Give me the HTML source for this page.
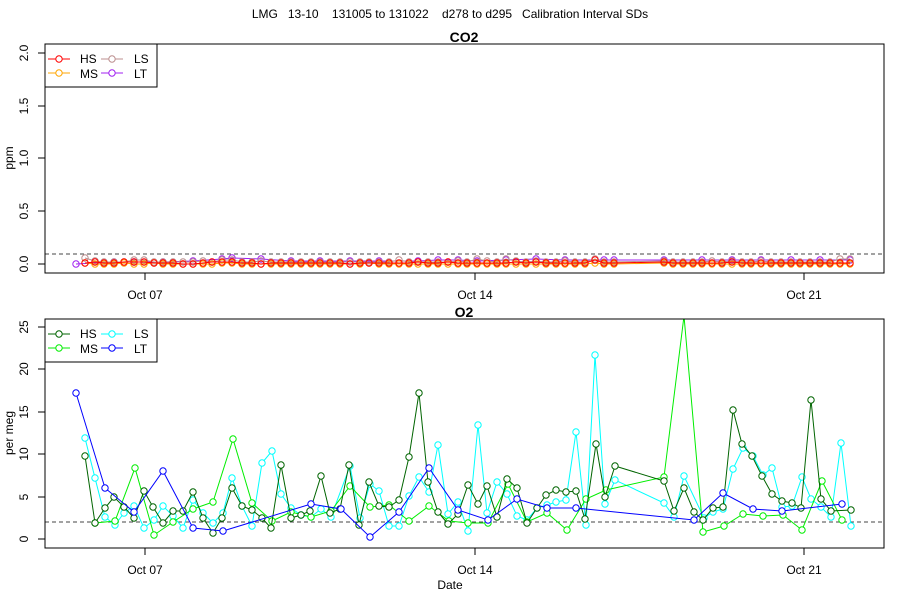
<!DOCTYPE html>
<html><head><meta charset="utf-8"><style>
html,body{margin:0;padding:0;background:#fff;}
svg{display:block;font-family:"Liberation Sans",Arial,sans-serif;}
</style></head><body>
<svg width="900" height="600" viewBox="0 0 900 600" xmlns="http://www.w3.org/2000/svg">
<defs>
<marker id="mR" viewBox="0 0 10 10" refX="5" refY="5" markerWidth="10" markerHeight="10" markerUnits="userSpaceOnUse"><circle cx="5" cy="5" r="3.2" fill="none" stroke="#ff0000" stroke-width="1"/></marker>
<marker id="mO" viewBox="0 0 10 10" refX="5" refY="5" markerWidth="10" markerHeight="10" markerUnits="userSpaceOnUse"><circle cx="5" cy="5" r="3.2" fill="none" stroke="#ffa500" stroke-width="1"/></marker>
<marker id="mB" viewBox="0 0 10 10" refX="5" refY="5" markerWidth="10" markerHeight="10" markerUnits="userSpaceOnUse"><circle cx="5" cy="5" r="3.2" fill="none" stroke="#bc8f8f" stroke-width="1"/></marker>
<marker id="mP" viewBox="0 0 10 10" refX="5" refY="5" markerWidth="10" markerHeight="10" markerUnits="userSpaceOnUse"><circle cx="5" cy="5" r="3.2" fill="none" stroke="#a020f0" stroke-width="1"/></marker>
<marker id="mDG" viewBox="0 0 10 10" refX="5" refY="5" markerWidth="10" markerHeight="10" markerUnits="userSpaceOnUse"><circle cx="5" cy="5" r="3.2" fill="#fff" stroke="#006400" stroke-width="1"/></marker>
<marker id="mG" viewBox="0 0 10 10" refX="5" refY="5" markerWidth="10" markerHeight="10" markerUnits="userSpaceOnUse"><circle cx="5" cy="5" r="3.2" fill="#fff" stroke="#00ee00" stroke-width="1"/></marker>
<marker id="mC" viewBox="0 0 10 10" refX="5" refY="5" markerWidth="10" markerHeight="10" markerUnits="userSpaceOnUse"><circle cx="5" cy="5" r="3.2" fill="#fff" stroke="#00ffff" stroke-width="1"/></marker>
<marker id="mBl" viewBox="0 0 10 10" refX="5" refY="5" markerWidth="10" markerHeight="10" markerUnits="userSpaceOnUse"><circle cx="5" cy="5" r="3.2" fill="#fff" stroke="#0000ff" stroke-width="1"/></marker>
<clipPath id="c2"><rect x="45" y="319" width="839" height="229"/></clipPath>
</defs>

<text x="450" y="18" font-size="12" text-anchor="middle" xml:space="preserve">LMG   13-10    131005 to 131022    d278 to d295   Calibration Interval SDs</text>

<!-- TOP PANEL -->
<text x="464" y="42" font-size="14" font-weight="bold" text-anchor="middle">CO2</text>
<line x1="45" y1="254" x2="884" y2="254" stroke="#444" stroke-dasharray="4,3"/>
<g fill="none" stroke-width="1">
<polyline stroke="#a020f0" marker-start="url(#mP)" marker-mid="url(#mP)" marker-end="url(#mP)" points="76,264 114,262 134,262 163,262 193,261 222,259 232,258 261,259 291,261 320,261 350,261 379,261 418,261 438,260 458,260 477,261 506,260 536,259 565,260 604,260 614,260 664,260 702,260 732,260 761,260 791,260 820,260 850,260"/>
<polyline stroke="#bc8f8f" marker-start="url(#mB)" marker-mid="url(#mB)" marker-end="url(#mB)" points="85,258 95,261 104,262 114,262 124,262 134,260 144,260 154,262 163,262 173,262 183,262 193,262 203,261 212,262 222,260 232,260 242,262 252,262 261,261 271,262 281,262 291,262 301,262 311,262 320,262 330,262 340,262 350,262 360,262 369,262 379,262 389,262 399,260 409,262 418,262 428,262 438,262 448,262 458,261 467,262 477,259 487,261 497,262 506,259 516,261 526,262 536,261 546,262 556,262 565,261 575,262 585,262 595,259 604,262 614,262 664,261 673,262 683,262 693,262 702,262 712,261 722,262 732,261 742,262 751,262 761,261 771,262 781,262 791,262 800,262 810,262 820,262 830,262 840,259 850,259"/>
<polyline stroke="#ffa500" marker-start="url(#mO)" marker-mid="url(#mO)" marker-end="url(#mO)" points="85,263 95,264 104,264 114,264 124,263 134,264 144,264 154,263 163,264 173,264 183,264 193,264 203,264 212,264 222,263 232,263 242,264 252,264 261,264 271,264 281,264 291,264 301,264 311,264 320,264 330,264 340,264 350,264 360,264 369,263 379,264 389,264 399,264 409,264 418,264 428,264 438,264 448,264 458,264 467,264 477,264 487,264 497,264 506,264 516,264 526,264 536,264 546,264 556,264 565,264 575,264 585,264 595,263 604,264 614,264 664,263 673,264 683,264 693,264 702,264 712,264 722,264 732,264 742,264 751,264 761,264 771,264 781,264 791,264 800,264 810,264 820,264 830,264 840,264 850,264"/>
<polyline stroke="#ff0000" marker-start="url(#mR)" marker-mid="url(#mR)" marker-end="url(#mR)" points="85,263 95,262 104,263 114,263 124,262 134,262 144,262 154,263 163,263 173,263 183,264 193,264 203,263 212,262 222,262 232,262 242,263 252,263 261,264 271,263 281,263 291,263 301,263 311,263 320,263 330,263 340,263 350,264 360,263 369,263 379,263 389,263 399,263 409,263 418,262 428,263 438,263 448,262 458,263 467,263 477,263 487,263 497,263 506,263 516,262 526,263 536,262 546,263 556,263 565,263 575,263 585,263 595,260 604,263 614,263 664,262 673,263 683,263 693,263 702,263 712,263 722,263 732,262 742,263 751,263 761,263 771,263 781,263 791,263 800,263 810,263 820,263 830,263 840,263 850,263"/>
</g>
<rect x="45" y="44" width="839" height="229" fill="none" stroke="#000"/>
<!-- top legend -->
<rect x="45" y="44" width="112" height="43" fill="#fff" stroke="#000"/>
<g stroke-width="1" fill="none">
<line x1="48" y1="59" x2="70" y2="59" stroke="#ff0000"/><circle cx="59" cy="59" r="3.2" fill="#fff" stroke="#ff0000"/>
<line x1="48" y1="73" x2="70" y2="73" stroke="#ffa500"/><circle cx="59" cy="73" r="3.2" fill="#fff" stroke="#ffa500"/>
<line x1="101" y1="59" x2="123" y2="59" stroke="#bc8f8f"/><circle cx="112" cy="59" r="3.2" fill="#fff" stroke="#bc8f8f"/>
<line x1="101" y1="73" x2="123" y2="73" stroke="#a020f0"/><circle cx="112" cy="73" r="3.2" fill="#fff" stroke="#a020f0"/>
</g>
<g font-size="12"><text x="80" y="63">HS</text><text x="80" y="78">MS</text><text x="134" y="63">LS</text><text x="134" y="78">LT</text></g>
<!-- top y axis -->
<g stroke="#000"><line x1="38" y1="264" x2="45" y2="264"/><line x1="38" y1="211" x2="45" y2="211"/><line x1="38" y1="158" x2="45" y2="158"/><line x1="38" y1="106" x2="45" y2="106"/><line x1="38" y1="53" x2="45" y2="53"/></g>
<g font-size="12" text-anchor="middle">
<text transform="translate(28,264) rotate(-90)">0.0</text>
<text transform="translate(28,211) rotate(-90)">0.5</text>
<text transform="translate(28,158) rotate(-90)">1.0</text>
<text transform="translate(28,106) rotate(-90)">1.5</text>
<text transform="translate(28,53) rotate(-90)">2.0</text>
<text transform="translate(13,158) rotate(-90)">ppm</text>
</g>
<g stroke="#000"><line x1="145" y1="273" x2="145" y2="280"/><line x1="475" y1="273" x2="475" y2="280"/><line x1="804" y1="273" x2="804" y2="280"/></g>
<g font-size="12" text-anchor="middle"><text x="145" y="299">Oct 07</text><text x="475" y="299">Oct 14</text><text x="804" y="299">Oct 21</text></g>

<!-- BOTTOM PANEL -->
<text x="464" y="317" font-size="14" font-weight="bold" text-anchor="middle">O2</text>
<line x1="45" y1="522" x2="884" y2="522" stroke="#444" stroke-dasharray="4,3"/>
<g fill="none" stroke-width="1" clip-path="url(#c2)">
<polyline stroke="#00ffff" marker-start="url(#mC)" marker-mid="url(#mC)" marker-end="url(#mC)" points="85,438 95,478 105,517 115,525 124,513 134,506 144,528 154,520 163,506 173,516 183,528 193,500 203,513 213,523 223,513 232,478 242,506 252,526 262,463 272,451 281,494 291,508 301,515 311,517 321,509 331,517 350,466 360,518 370,484 379,491 389,526 399,526 409,496 419,477 429,492 438,445 448,514 458,502 468,531 478,425 487,513 497,482 507,494 517,516 527,520 537,508 547,505 556,502 566,500 576,432 586,525 595,355 605,504 615,480 664,503 674,517 684,476 704,518 713,512 723,509 733,469 743,448 753,456 763,475 772,468 782,507 792,506 802,477 811,499 821,507 831,517 841,443 851,526"/>
<polyline stroke="#00ee00" marker-start="url(#mG)" marker-mid="url(#mG)" marker-end="url(#mG)" points="95,523 115,521 135,468 154,535 173,522 193,509 213,502 233,439 252,503 272,521 291,512 311,517 331,511 350,486 370,507 389,505 409,521 429,506 449,521 468,523 488,523 508,484 527,522 547,513 567,530 586,499 606,490 664,477 684,316 703,532 724,526 743,514 763,516 783,515 802,530 822,481 842,520"/>
<polyline stroke="#006400" marker-start="url(#mDG)" marker-mid="url(#mDG)" marker-end="url(#mDG)" points="85,456 95,523 105,508 114,497 124,507 134,518 144,491 153,507 163,523 173,511 183,511 193,492 203,518 213,533 222,518 232,488 242,506 252,510 262,518 271,528 281,465 291,518 301,515 310,511 321,476 330,513 340,509 349,465 359,525 369,482 379,506 389,507 399,500 409,457 419,393 428,482 438,512 448,524 458,514 468,485 478,504 487,486 497,517 507,479 517,488 527,523 537,508 546,495 556,490 566,492 576,491 585,519 596,444 605,497 615,466 664,481 674,511 684,488 694,512 703,520 713,508 723,507 733,410 742,444 752,456 762,476 772,494 782,501 792,503 801,508 811,400 821,499 831,511 851,510"/>
<polyline stroke="#0000ff" marker-start="url(#mBl)" marker-mid="url(#mBl)" marker-end="url(#mBl)" points="76,393 105,488 134,512 163,471 193,528 223,531 311,504 341,509 370,537 399,512 429,468 458,510 488,520 517,499 547,508 576,508 694,520 723,493 753,509 782,511 842,504"/>
</g>
<rect x="45" y="319" width="839" height="229" fill="none" stroke="#000"/>
<!-- bottom legend -->
<rect x="45" y="319" width="112" height="43" fill="#fff" stroke="#000"/>
<g stroke-width="1" fill="none">
<line x1="48" y1="334" x2="70" y2="334" stroke="#006400"/><circle cx="59" cy="334" r="3.2" fill="#fff" stroke="#006400"/>
<line x1="48" y1="348" x2="70" y2="348" stroke="#00ee00"/><circle cx="59" cy="348" r="3.2" fill="#fff" stroke="#00ee00"/>
<line x1="101" y1="334" x2="123" y2="334" stroke="#00ffff"/><circle cx="112" cy="334" r="3.2" fill="#fff" stroke="#00ffff"/>
<line x1="101" y1="348" x2="123" y2="348" stroke="#0000ff"/><circle cx="112" cy="348" r="3.2" fill="#fff" stroke="#0000ff"/>
</g>
<g font-size="12"><text x="80" y="338">HS</text><text x="80" y="353">MS</text><text x="134" y="338">LS</text><text x="134" y="353">LT</text></g>
<g stroke="#000"><line x1="38" y1="539" x2="45" y2="539"/><line x1="38" y1="497" x2="45" y2="497"/><line x1="38" y1="454" x2="45" y2="454"/><line x1="38" y1="412" x2="45" y2="412"/><line x1="38" y1="369" x2="45" y2="369"/><line x1="38" y1="327" x2="45" y2="327"/></g>
<g font-size="12" text-anchor="middle">
<text transform="translate(28,539) rotate(-90)">0</text>
<text transform="translate(28,497) rotate(-90)">5</text>
<text transform="translate(28,454) rotate(-90)">10</text>
<text transform="translate(28,412) rotate(-90)">15</text>
<text transform="translate(28,369) rotate(-90)">20</text>
<text transform="translate(28,327) rotate(-90)">25</text>
<text transform="translate(13,433) rotate(-90)">per meg</text>
</g>
<g stroke="#000"><line x1="145" y1="548" x2="145" y2="555"/><line x1="475" y1="548" x2="475" y2="555"/><line x1="804" y1="548" x2="804" y2="555"/></g>
<g font-size="12" text-anchor="middle"><text x="145" y="574">Oct 07</text><text x="475" y="574">Oct 14</text><text x="804" y="574">Oct 21</text><text x="450" y="589">Date</text></g>
</svg>
</body></html>
